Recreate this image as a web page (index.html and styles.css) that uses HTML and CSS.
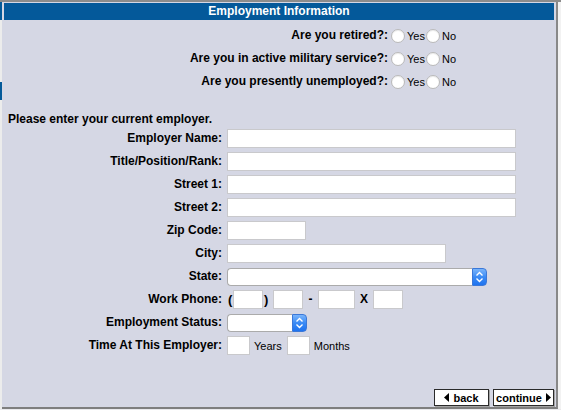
FILE: index.html
```html
<!DOCTYPE html>
<html>
<head>
<meta charset="utf-8">
<link rel="stylesheet" href="styles.css">
</head>
<body>
<div class="frame">
  <div class="edge"></div>
  <div class="panel">
    <div class="header">Employment Information</div>
    <div class="questions">
      <div class="q-label">Are you retired?:</div>
      <div class="choices"><input type="radio" class="radio" name="q1"><span class="opt">Yes</span><input type="radio" class="radio" name="q1"><span class="opt">No</span></div>
      <div class="q-label">Are you in active military service?:</div>
      <div class="choices"><input type="radio" class="radio" name="q2"><span class="opt">Yes</span><input type="radio" class="radio" name="q2"><span class="opt">No</span></div>
      <div class="q-label">Are you presently unemployed?:</div>
      <div class="choices"><input type="radio" class="radio" name="q3"><span class="opt">Yes</span><input type="radio" class="radio" name="q3"><span class="opt">No</span></div>
    </div>
    <p class="intro">Please enter your current employer.</p>
    <div class="form">
      <div class="f-label">Employer Name:</div>
      <div class="f-field"><input type="text" class="txt w-long"></div>
      <div class="f-label">Title/Position/Rank:</div>
      <div class="f-field"><input type="text" class="txt w-long"></div>
      <div class="f-label">Street 1:</div>
      <div class="f-field"><input type="text" class="txt w-long"></div>
      <div class="f-label">Street 2:</div>
      <div class="f-field"><input type="text" class="txt w-long"></div>
      <div class="f-label">Zip Code:</div>
      <div class="f-field"><input type="text" class="txt w-zip"></div>
      <div class="f-label">City:</div>
      <div class="f-field"><input type="text" class="txt w-city"></div>
      <div class="f-label">State:</div>
      <div class="f-field">
        <span class="select w-state"><span class="sel-box"></span><span class="sel-btn"><svg width="9" height="12" viewBox="0 0 9 12"><path d="M1.5 4.5 L4.5 1.5 L7.5 4.5 M1.5 7.5 L4.5 10.5 L7.5 7.5" fill="none" stroke="#fff" stroke-width="1.4"/></svg></span></span>
      </div>
      <div class="f-label">Work Phone:</div>
      <div class="f-field phone">
        <span class="sep s-open">(</span><input type="text" class="txt w-ph"><span class="sep s-close">)</span><input type="text" class="txt w-ph"><span class="sep s-dash">-</span><input type="text" class="txt w-ph4"><span class="sep s-x">X</span><input type="text" class="txt w-ph">
      </div>
      <div class="f-label">Employment Status:</div>
      <div class="f-field">
        <span class="select w-status"><span class="sel-box"></span><span class="sel-btn"><svg width="9" height="12" viewBox="0 0 9 12"><path d="M1.5 4.5 L4.5 1.5 L7.5 4.5 M1.5 7.5 L4.5 10.5 L7.5 7.5" fill="none" stroke="#fff" stroke-width="1.4"/></svg></span></span>
      </div>
      <div class="f-label">Time At This Employer:</div>
      <div class="f-field time">
        <input type="text" class="txt w-num"><span class="unit u-years">Years</span><input type="text" class="txt w-num"><span class="unit u-months">Months</span>
      </div>
    </div>
    <div class="actions">
      <button class="btn btn-back"><svg class="tri" width="5" height="9" viewBox="0 0 5 9"><path d="M5 0 L0 4.5 L5 9 Z" fill="#000"/></svg>back</button>
      <button class="btn btn-cont">continue<svg class="tri" width="5" height="9" viewBox="0 0 5 9"><path d="M0 0 L5 4.5 L0 9 Z" fill="#000"/></svg></button>
    </div>
  </div>
  <div class="gutter"></div>
</div>
</body>
</html>
```

FILE: styles.css
```css
* { box-sizing: border-box; }
html, body { margin: 0; padding: 0; }
body {
  width: 561px;
  height: 410px;
  overflow: hidden;
  background: #e9e9ec;
  font-family: "Liberation Sans", Arial, Helvetica, sans-serif;
  color: #000;
}
.frame {
  display: flex;
  height: 409px;
  border-top: 2px solid #8c8c8c;
}
.edge {
  width: 2px;
  background: linear-gradient(to bottom,
    #045a99 0, #045a99 18px,
    #ececec 18px, #ececec 80px,
    #045a99 80px, #045a99 98px,
    #ececec 98px);
}
.panel {
  width: 556px;
  background: #d5d7e4;
  border-right: 2px solid #888;
  border-bottom: 2px solid #7e7e7e;
  display: flex;
  flex-direction: column;
}
.gutter {
  width: 3px;
  background: #f2f2f2;
}
.header {
  margin: 1px 2px 0 2px;
  height: 17px;
  line-height: 17px;
  background: #04599a;
  color: #fff;
  font-weight: bold;
  font-size: 12px;
  text-align: center;
}
.questions {
  display: grid;
  grid-template-columns: 386px auto;
  row-gap: 4px;
  column-gap: 3px;
  padding-top: 6px;
}
.q-label {
  height: 19px;
  line-height: 19px;
  text-align: right;
  font-weight: bold;
  font-size: 12px;
}
.choices {
  display: flex;
  align-items: center;
  height: 19px;
  font-size: 11px;
}
.radio {
  appearance: none;
  -webkit-appearance: none;
  width: 14px;
  height: 14px;
  margin: 0;
  border-radius: 50%;
  background: #fff;
  border: 1px solid #b9b9b9;
  box-shadow: inset 0 1px 1px rgba(0,0,0,0.08);
}
.opt {
  margin-left: 2px;
  margin-right: 1px;
}
.intro {
  margin: 21px 0 3px 0;
  padding-left: 6px;
  font-size: 12px;
  font-weight: bold;
  line-height: 14px;
}
.form {
  display: grid;
  grid-template-columns: 220px 1fr;
  column-gap: 5px;
  row-gap: 4px;
}
.f-label {
  height: 19px;
  line-height: 19px;
  text-align: right;
  font-weight: bold;
  font-size: 12px;
}
.f-field {
  display: flex;
  align-items: center;
  height: 19px;
}
.txt {
  height: 19px;
  margin: 0;
  padding: 0;
  border: 1px solid #c9c9cc;
  background: #fff;
  font-size: 11px;
  flex: none;
}
.w-long { width: 289px; }
.w-zip { width: 79px; }
.w-city { width: 219px; }
.w-ph { width: 30px; }
.w-ph4 { width: 37px; }
.w-num { width: 23px; }
.select {
  display: flex;
  height: 18px;
}
.w-state { width: 260px; }
.w-status { width: 80px; }
.sel-box {
  flex: 1;
  background: #fff;
  border: 1px solid #ababab;
  border-right: none;
  border-radius: 4px 0 0 4px;
}
.sel-btn {
  width: 15px;
  display: flex;
  align-items: center;
  justify-content: center;
  border-radius: 0 4px 4px 0;
  background: linear-gradient(to bottom, #79b4fb 0%, #3b8bf5 50%, #1f73ef 100%);
  border: 1px solid #3b78d8;
}
.sep {
  flex: none;
  font-weight: bold;
  font-size: 13px;
  line-height: 19px;
}
.s-open { width: 6px; padding-left: 1px; }
.s-close { width: 10px; padding-left: 1px; }
.s-dash { width: 15px; text-align: center; font-size: 12px; }
.s-x { width: 18px; text-align: center; font-size: 12px; }
.unit {
  font-size: 11px;
}
.u-years { margin: 0 5px 0 4px; }
.u-months { margin-left: 4px; }
.actions {
  margin-top: auto;
  margin-bottom: 1px;
  padding-right: 2px;
  display: flex;
  justify-content: flex-end;
  gap: 4px;
}
.btn {
  height: 17px;
  padding: 0;
  margin: 0;
  background: #fff;
  border: 1px solid #2a2a2a;
  box-shadow: 1px 1px 0 #a4a4a4;
  font-family: "Liberation Sans", Arial, sans-serif;
  font-weight: bold;
  font-size: 11px;
  color: #000;
  display: flex;
  align-items: center;
  justify-content: center;
  gap: 4px;
}
.btn-back { width: 55px; }
.btn-cont { width: 61px; }
```
